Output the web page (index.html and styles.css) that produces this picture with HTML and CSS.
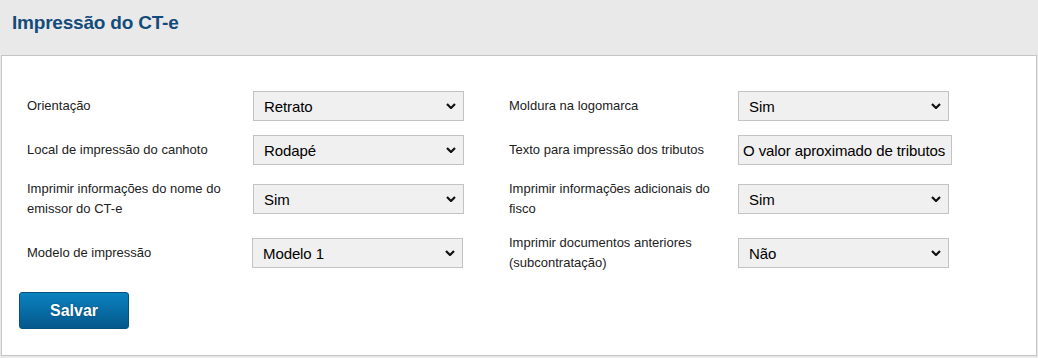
FILE: index.html
```html
<!DOCTYPE html>
<html lang="pt-BR">
<head>
  <meta charset="UTF-8">
  <title>Impressão do CT-e</title>
  <link rel="stylesheet" href="styles.css">
</head>
<body>

  <div class="page-header">
    <h1>Impressão do CT-e</h1>
  </div>

  <div class="panel">
    <div class="form-grid">
      <label class="field-label">Orientação</label>
      <div class="select-wrap">
        <select><option>Retrato</option></select>
        <svg class="chevron" viewBox="0 0 10 6"><path d="M1 1l4 4 4-4"/></svg>
      </div>

      <label class="field-label right">Moldura na logomarca</label>
      <div class="select-wrap">
        <select><option>Sim</option></select>
        <svg class="chevron" viewBox="0 0 10 6"><path d="M1 1l4 4 4-4"/></svg>
      </div>

      <label class="field-label">Local de impressão do canhoto</label>
      <div class="select-wrap">
        <select><option>Rodapé</option></select>
        <svg class="chevron" viewBox="0 0 10 6"><path d="M1 1l4 4 4-4"/></svg>
      </div>

      <label class="field-label right">Texto para impressão dos tributos</label>
      <input class="text-input" type="text" value="O valor aproximado de tributos">

      <label class="field-label">Imprimir informações do nome do emissor do CT-e</label>
      <div class="select-wrap">
        <select><option>Sim</option></select>
        <svg class="chevron" viewBox="0 0 10 6"><path d="M1 1l4 4 4-4"/></svg>
      </div>

      <label class="field-label right">Imprimir informações adicionais do fisco</label>
      <div class="select-wrap">
        <select><option>Sim</option></select>
        <svg class="chevron" viewBox="0 0 10 6"><path d="M1 1l4 4 4-4"/></svg>
      </div>

      <label class="field-label">Modelo de impressão</label>
      <div class="select-wrap shift">
        <select><option>Modelo 1</option></select>
        <svg class="chevron" viewBox="0 0 10 6"><path d="M1 1l4 4 4-4"/></svg>
      </div>

      <label class="field-label right">Imprimir documentos anteriores (subcontratação)</label>
      <div class="select-wrap">
        <select><option>Não</option></select>
        <svg class="chevron" viewBox="0 0 10 6"><path d="M1 1l4 4 4-4"/></svg>
      </div>
    </div>

    <button class="btn-save">Salvar</button>
  </div>

</body>
</html>
```

FILE: styles.css
```css
* {
  box-sizing: border-box;
}

body {
  margin: 0;
  background: #e9e9e9;
  font-family: Arial, "Liberation Sans", sans-serif;
  color: #222;
}

.page-header {
  height: 55px;
  padding: 12px 12px 0;
}

.page-header h1 {
  margin: 0;
  font-size: 19px;
  line-height: 22px;
  letter-spacing: -0.2px;
  font-weight: bold;
  color: #134c7b;
}

.panel {
  margin: 0 1px;
  height: 301px;
  background: #fff;
  border: 1px solid #c4c4c4;
  padding: 35px 0 0 17px;
}

.form-grid {
  display: grid;
  grid-template-columns: 226px 211px 45px 229px 214px;
  grid-template-rows: 30px 30px 40px 40px;
  row-gap: 14px;
  align-items: center;
  padding-left: 8px;
}

.field-label {
  font-size: 13px;
  line-height: 20px;
  padding-right: 20px;
}

.field-label.right {
  grid-column: 4;
}

.select-wrap {
  position: relative;
  width: 211px;
  height: 30px;
}

.select-wrap.shift {
  margin-left: -1px;
}

select,
.text-input {
  display: block;
  width: 211px;
  height: 30px;
  margin: 0;
  padding: 0 0 0 10px;
  font-family: Arial, "Liberation Sans", sans-serif;
  font-size: 15px;
  letter-spacing: -0.1px;
  color: #000;
  background: #f0f0f0;
  border: 1px solid #c3c3c3;
  border-radius: 0;
  appearance: none;
  -webkit-appearance: none;
  outline: none;
}

.text-input {
  width: 214px;
  padding-left: 4px;
}

.chevron {
  position: absolute;
  right: 8px;
  top: 12px;
  width: 10px;
  height: 6px;
  fill: none;
  stroke: #111;
  stroke-width: 2.2;
  pointer-events: none;
}

.btn-save {
  margin-top: 19px;
  width: 110px;
  height: 37px;
  font-family: Arial, "Liberation Sans", sans-serif;
  font-size: 16px;
  font-weight: bold;
  color: #fff;
  text-shadow: 0 0 2px rgba(0, 0, 0, 0.35);
  background: linear-gradient(#0a82bf, #05588c);
  border: 1px solid #06507f;
  border-radius: 3px;
  cursor: pointer;
}
```
